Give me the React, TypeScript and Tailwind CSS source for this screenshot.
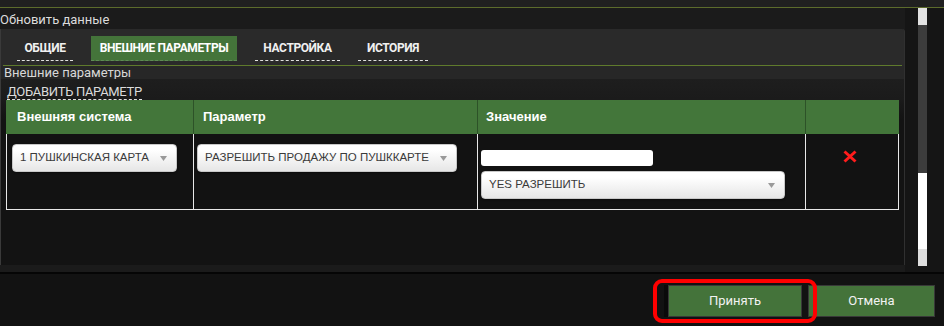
import React from "react";

function Arrow() {
  return (
    <svg width="7" height="5" viewBox="0 0 7 5" className="shrink-0">
      <path d="M0 0 L7 0 L3.5 5 Z" fill="#9a9a9a" />
    </svg>
  );
}

function Select({ label, className }: { label: string; className: string }) {
  return (
    <div
      className={`flex items-center justify-between rounded-[4px] border border-[#c8c8c8] bg-[linear-gradient(#ffffff_20%,#e6e6e6)] pl-[7px] pr-[9px] text-[11.5px] text-[#3a3a3a] shadow-[0_1px_2px_rgba(0,0,0,0.4)] ${className}`}
      style={{ fontFamily: '"Liberation Sans", Arial, sans-serif' }}
    >
      <span>{label}</span>
      <Arrow />
    </div>
  );
}

function Tab({ label, w, active }: { label: string; w: string; active?: boolean }) {
  return (
    <div
      className={`flex h-[25px] items-center justify-center border-b border-dashed text-[12px] font-bold tracking-[-0.4px] ${w} ${
        active ? "bg-[#44743a] border-[#5f8a55] text-white" : "border-[#e0e0e0] text-[#f0f0f0]"
      }`}
    >
      {label}
    </div>
  );
}

export default function App() {
  return (
    <div
      className="relative flex h-[326px] w-[944px] flex-col overflow-hidden bg-[#1b1b1b] text-[#dcdcdc]"
      style={{ fontFamily: 'Roboto, "Liberation Sans", sans-serif' }}
    >
      {/* top strip */}
      <div className="h-[8px] shrink-0 border-b border-[#5c6b2c] bg-[#202020]" />

      {/* main */}
      <div className="flex h-[264px] shrink-0">
        <div className="flex w-[905px] flex-col bg-[#1b1b1b]">
          <div className="h-[21px] pt-[5px] text-[13px] leading-[14px] text-[#dcdcdc]">Обновить данные</div>
          <div className="flex h-[236px] flex-col overflow-hidden rounded-tr-[3px] border-l border-r border-l-[#3a3a3a] border-r-[#303030] bg-[#2a2a2a]">
            {/* tabs */}
            <div className="flex gap-[18px] pl-[16px] pt-[7px]">
              <Tab label="ОБЩИЕ" w="w-[56px]" />
              <Tab label="ВНЕШНИЕ ПАРАМЕТРЫ" w="w-[146px]" active />
              <Tab label="НАСТРОЙКА" w="w-[85px]" />
              <Tab label="ИСТОРИЯ" w="w-[70px]" />
            </div>
            <div className="ml-[2px] mr-[2px] mt-[4px] h-px bg-[#5f7a2c]" />
            <div className="h-[13px] bg-[#272727] pl-[3px] text-[13px] leading-[13px] text-[#d8d8d8]">Внешние параметры</div>
            <div className="flex flex-1 flex-col bg-[linear-gradient(#1e1e1e,#1b1b1b_20px,#131313_40px)]">
              <div className="flex pl-[6px] pt-[6px]">
                <span className="block border-b border-dashed border-[#e0e0e0] text-[13px] leading-[14px] tracking-[-0.3px] text-[#dcdcdc]">
                  ДОБАВИТЬ ПАРАМЕТР
                </span>
              </div>
              {/* table */}
              <div
                className="ml-[5px] grid w-[893px] grid-cols-[187px_284px_328px_94px]"
                style={{ fontFamily: '"Liberation Sans", Arial, sans-serif' }}
              >
                <div className="flex h-[34px] items-center bg-[#43763a] pl-[11px] text-[13px] font-bold text-white">Внешняя система</div>
                <div className="flex h-[34px] items-center border-l border-[#2d5228] bg-[#43763a] pl-[9px] text-[13px] font-bold text-white">Параметр</div>
                <div className="flex h-[34px] items-center border-l border-[#2d5228] bg-[#43763a] pl-[8px] text-[13px] font-bold text-white">Значение</div>
                <div className="h-[34px] border-l border-[#2d5228] bg-[#43763a]" />

                <div className="h-[76px] border-b border-l border-[#e8e8e8] bg-[#121212] pl-[5px] pt-[10px]">
                  <Select label="1 ПУШКИНСКАЯ КАРТА" className="h-[28px] w-[165px]" />
                </div>
                <div className="h-[76px] border-b border-l border-[#e8e8e8] bg-[#121212] pl-[3px] pt-[10px]">
                  <Select label="РАЗРЕШИТЬ ПРОДАЖУ ПО ПУШККАРТЕ" className="h-[28px] w-[260px]" />
                </div>
                <div className="flex h-[76px] flex-col gap-[5px] border-b border-l border-[#e8e8e8] bg-[#121212] pl-[3px] pt-[16px]">
                  <div className="h-[16px] w-[172px] rounded-[3px] bg-white" />
                  <Select label="YES РАЗРЕШИТЬ" className="h-[28px] w-[304px]" />
                </div>
                <div className="flex h-[76px] justify-center border-b border-l border-r border-[#e8e8e8] bg-[#121212] pr-[5px] pt-[16px]">
                  <svg width="14" height="13" viewBox="0 0 14 13">
                    <path d="M1.5 1.5 L12.5 11.5 M12.5 1.5 L1.5 11.5" stroke="#ff1c1c" strokeWidth="3" strokeLinecap="butt" />
                  </svg>
                </div>
              </div>
            </div>
          </div>
        </div>
        {/* scrollbar area */}
        <div className="flex flex-1 bg-[#151515] pl-[13px]">
          <div className="flex h-[258px] w-[9px] flex-col">
            <div className="h-[17px] bg-[#e2e2e2]" />
            <div className="h-[148px] bg-[#3c3c3c]" />
            <div className="h-[76px] bg-white" />
            <div className="h-[17px] bg-[#dedede]" />
          </div>
        </div>
      </div>

      {/* footer */}
      <div className="flex flex-1 items-start justify-end gap-[6px] border-t-2 border-[#050505] bg-[#121212] pr-[9px] pt-[11px]">
        <button className="flex h-[32px] w-[134px] items-center justify-center border border-[#383838] bg-[#44733a] text-[13px] text-[#f2f2f2] shadow-[-4px_0_0_#0a0a0a]">
          Принять
        </button>
        <button className="flex h-[32px] w-[127px] items-center justify-center border border-[#383838] bg-[#44733a] text-[13px] text-[#f2f2f2]">
          Отмена
        </button>
      </div>

      {/* red annotation */}
      <div className="pointer-events-none absolute left-[653px] top-[279px] h-[44px] w-[164px] rounded-[9px] border-[4px] border-[#ff0000]" />
    </div>
  );
}
